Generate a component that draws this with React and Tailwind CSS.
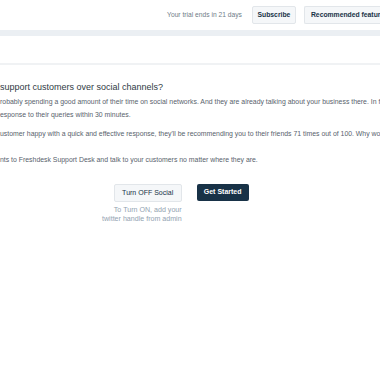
import React from 'react';

export default function App() {
    return (
        <div className="w-[380px] h-[380px] overflow-hidden bg-white" style={{fontFamily: '"Liberation Sans", Arial, sans-serif'}}>
            <div className="h-[30px] flex items-center justify-end gap-2 whitespace-nowrap">
                <span className="text-[6.7px] text-[#6f7c87] mr-[2px]">Your trial ends in 21 days</span>
                <button className="h-[18px] w-[44px] rounded-[2px] border border-[#e2e6ea] bg-[#f5f7f9] text-[6.8px] font-bold text-[#183247]">Subscribe</button>
                <button className="h-[18px] px-[6px] rounded-l-[2px] border border-r-0 border-[#e2e6ea] bg-[#f5f7f9] text-[6.8px] font-bold text-[#183247] shrink-0 -mr-[14px]">Recommended features</button>
            </div>
            <div className="h-[6px] bg-[#ebeff3]"></div>
            <div className="h-[29px] border-b-[2px] border-[#f0f2f4]"></div>

            <div className="pt-[15px] whitespace-nowrap overflow-hidden">
                <h2 className="text-[9px] leading-[14px] text-[#2f3a44]">support customers over social channels?</h2>
                <p className="mt-[1px] text-[6.9px] leading-[13px] text-[#58626c]">robably spending a good amount of their time on social networks. And they are already talking about your business there. In fact, they</p>
                <p className="text-[6.9px] leading-[13px] text-[#58626c]">esponse to their queries within 30 minutes.</p>
                <p className="mt-[6px] text-[6.9px] leading-[13px] text-[#58626c]">ustomer happy with a quick and effective response, they'll be recommending you to their friends 71 times out of 100. Why would you</p>
                <p className="mt-[13px] text-[6.9px] leading-[13px] text-[#58626c]">nts to Freshdesk Support Desk and talk to your customers no matter where they are.</p>
            </div>

            <div className="mt-[18px] flex gap-[15px] pl-[102px]">
                <div className="flex flex-col items-end">
                    <button className="w-[68px] h-[18px] rounded-[2px] border border-[#e2e6ea] bg-[#f5f7f9] text-[7px] text-[#183247]">Turn OFF Social</button>
                    <p className="mt-[4px] text-[7.1px] leading-[8.5px] text-[#92a2b1] text-right whitespace-nowrap">To Turn ON, add your<br/>twitter handle from admin</p>
                </div>
                <button className="w-[52px] h-[17px] rounded-[2px] bg-[#183247] text-[7px] font-bold text-white">Get Started</button>
            </div>
        </div>
    );
}
